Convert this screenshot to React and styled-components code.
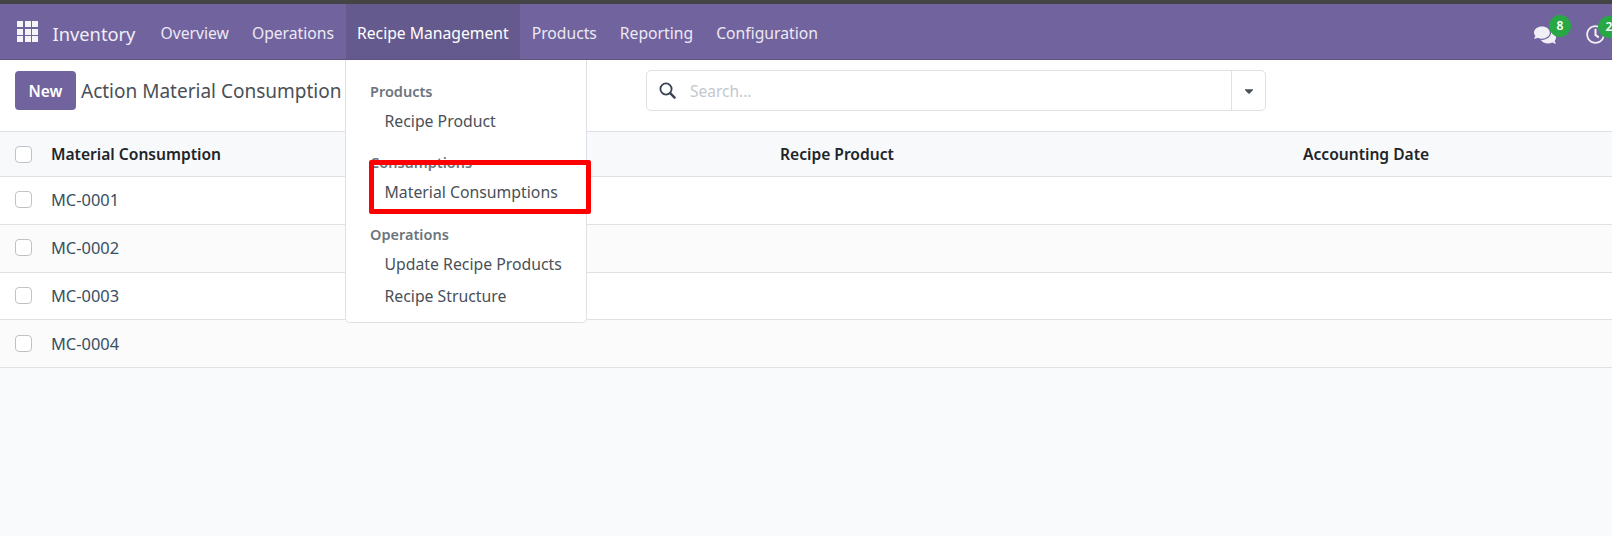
import React from 'react';
import styled, { createGlobalStyle } from 'styled-components';
import { FaCaretDown, FaComments, FaRegClock } from 'react-icons/fa';

const GlobalStyle = createGlobalStyle`
  html, body {
    margin: 0;
    height: 100%;
    overflow: hidden;
    background: #f9fafb;
    font-family: "Noto Sans", "Open Sans", sans-serif;
  }
`

const Page = styled.div`
  position: relative;
  width: 1612px;
  height: 536px;
  overflow: hidden;
`

const TopStrip = styled.div`
  height: 4px;
  background: #444444;
`

const NavBar = styled.div`
  display: flex;
  align-items: stretch;
  height: 55px;
  background: #71639e;
  border-bottom: 1px solid #5f5484;
  color: #fff;
`

const AppsButton = styled.div`
  display: grid;
  grid-template-columns: repeat(3, 6px);
  grid-auto-rows: 6px;
  gap: 1.5px;
  align-self: center;
  margin-left: 17px;
  span { background: #f4f3f8; }
`

const Brand = styled.div`
  display: flex;
  align-items: center;
  margin-left: 14.5px;
  margin-right: 13.5px;
  padding-top: 3px;
  font-size: 18.3px;
  color: #f1eff6;
`

const NavItem = styled.div`
  display: flex;
  align-items: center;
  padding: 2px 11.5px 0;
  font-size: 15.7px;
  color: ${p => (p.$active ? '#fff' : '#ece9f3')};
  background: ${p => (p.$active ? '#655a8d' : 'transparent')};
`

const Systray = styled.div`
  display: flex;
  align-items: center;
  margin-left: auto;
  padding-top: 6px;
  color: #f1eff6;
`

const TrayIcon = styled.div`
  position: relative;
  display: flex;
  font-size: ${p => p.$size}px;
  margin-right: ${p => p.$gap}px;
`

const Badge = styled.span`
  position: absolute;
  top: -9px;
  left: ${p => p.$left}px;
  width: 22px;
  height: 22px;
  border-radius: 50%;
  background: #28a745;
  color: #fff;
  font-size: 12px;
  font-weight: 600;
  line-height: 22px;
  text-align: center;
`

const ControlPanel = styled.div`
  display: flex;
  align-items: center;
  height: 71px;
  background: #fff;
  padding: 0 0 10px 15px;
  box-sizing: border-box;
`

const NewButton = styled.button`
  width: 61px;
  height: 39px;
  border: none;
  border-radius: 4px;
  background: #71639e;
  color: #fff;
  font-family: inherit;
  font-size: 15.5px;
  font-weight: 600;
  padding: 0;
`

const Title = styled.div`
  width: 565px;
  margin-left: 5px;
  box-sizing: border-box;
  font-size: 19px;
  color: #495057;
  white-space: nowrap;
`

const SearchBox = styled.div`
  display: flex;
  align-items: center;
  width: 620px;
  height: 41px;
  box-sizing: border-box;
  border: 1px solid #dee2e6;
  border-radius: 5px;
  background: #fff;
`

const SearchIcon = styled.svg`
  margin-left: 12px;
  width: 17px;
  height: 17px;
  color: #374151;
`

const Placeholder = styled.div`
  flex: 1;
  margin-left: 14px;
  font-size: 15.5px;
  color: #c3c7cf;
`

const Caret = styled.div`
  display: flex;
  align-items: center;
  justify-content: center;
  width: 33px;
  height: 100%;
  border-left: 1px solid #dee2e6;
  font-size: 14px;
  color: #495057;
`

const Row = styled.div`
  display: grid;
  grid-template-columns: 51px 729px 523px 1fr;
  align-items: center;
  height: ${p => (p.$head ? '46px' : '47.75px')};
  box-sizing: border-box;
  padding-bottom: ${p => (p.$head ? 0 : 1)}px;
  border-bottom: 1px solid #dee2e6;
  border-top: ${p => (p.$head ? '1px solid #dee2e6' : 'none')};
  background: ${p => (p.$head ? '#f8f9fa' : p.$alt ? '#fbfbfb' : '#fff')};
  font-size: ${p => (p.$head ? '15.6px' : '16.4px')};
  font-weight: ${p => (p.$head ? 600 : 400)};
  color: ${p => (p.$head ? '#212529' : '#374f63')};
`

const Check = styled.span`
  display: block;
  width: 15px;
  height: 15px;
  margin-left: 15px;
  border: 1px solid #bfc3c8;
  border-radius: 4px;
  background: #fff;
`

const Menu = styled.div`
  position: absolute;
  top: 60px;
  left: 345px;
  width: 242px;
  height: 263px;
  box-sizing: border-box;
  padding-top: 18px;
  background: #fff;
  border: 1px solid #dee2e6;
  border-top: none;
  border-radius: 0 0 5px 5px;
`

const MenuHeader = styled.div`
  height: 26px;
  margin-top: ${p => p.$top || 0}px;
  padding-left: 24px;
  font-size: 14.5px;
  line-height: 26px;
  font-weight: 600;
  color: #6c757d;
`

const MenuItem = styled.div`
  height: 32px;
  padding-left: 38.5px;
  font-size: 15.8px;
  line-height: 34px;
  color: #495057;
`

const Highlight = styled.div`
  position: absolute;
  top: 100px;
  left: 23px;
  width: 222px;
  height: 54px;
  box-sizing: border-box;
  border: 5px solid #ff0000;
  border-radius: 2px;
`

const navItems = ['Overview', 'Operations', 'Recipe Management', 'Products', 'Reporting', 'Configuration']
const records = ['MC-0001', 'MC-0002', 'MC-0003', 'MC-0004']

function App() {
  return (
    <Page>
      <GlobalStyle />
      <TopStrip />
      <NavBar>
        <AppsButton>
          {Array.from({ length: 9 }).map((_, i) => <span key={i} />)}
        </AppsButton>
        <Brand>Inventory</Brand>
        {navItems.map((item) => (
          <NavItem key={item} $active={item === 'Recipe Management'}>{item}</NavItem>
        ))}
        <Systray>
          <TrayIcon $size={22} $gap={30}>
            <FaComments />
            <Badge $left={15}>8</Badge>
          </TrayIcon>
          <TrayIcon $size={19} $gap={7}>
            <FaRegClock />
            <Badge $left={12}>2</Badge>
          </TrayIcon>
        </Systray>
      </NavBar>

      <ControlPanel>
        <NewButton>New</NewButton>
        <Title>Action Material Consumption</Title>
        <SearchBox>
          <SearchIcon viewBox="0 0 17 17" fill="none" stroke="currentColor">
            <circle cx="7" cy="7" r="5.6" strokeWidth="1.8" />
            <path d="M11.2 11.2L15.6 15.6" strokeWidth="2.4" strokeLinecap="round" />
          </SearchIcon>
          <Placeholder>Search...</Placeholder>
          <Caret><FaCaretDown /></Caret>
        </SearchBox>
      </ControlPanel>

      <Row $head>
        <Check />
        <div>Material Consumption</div>
        <div>Recipe Product</div>
        <div>Accounting Date</div>
      </Row>
      {records.map((rec, i) => (
        <Row key={rec} $alt={i % 2 === 1}>
          <Check />
          <div>{rec}</div>
        </Row>
      ))}

      <Menu>
        <MenuHeader>Products</MenuHeader>
        <MenuItem>Recipe Product</MenuItem>
        <MenuHeader $top={13}>Consumptions</MenuHeader>
        <MenuItem>Material Consumptions</MenuItem>
        <MenuHeader $top={14}>Operations</MenuHeader>
        <MenuItem>Update Recipe Products</MenuItem>
        <MenuItem>Recipe Structure</MenuItem>
        <Highlight />
      </Menu>
    </Page>
  );
}

export default App;
